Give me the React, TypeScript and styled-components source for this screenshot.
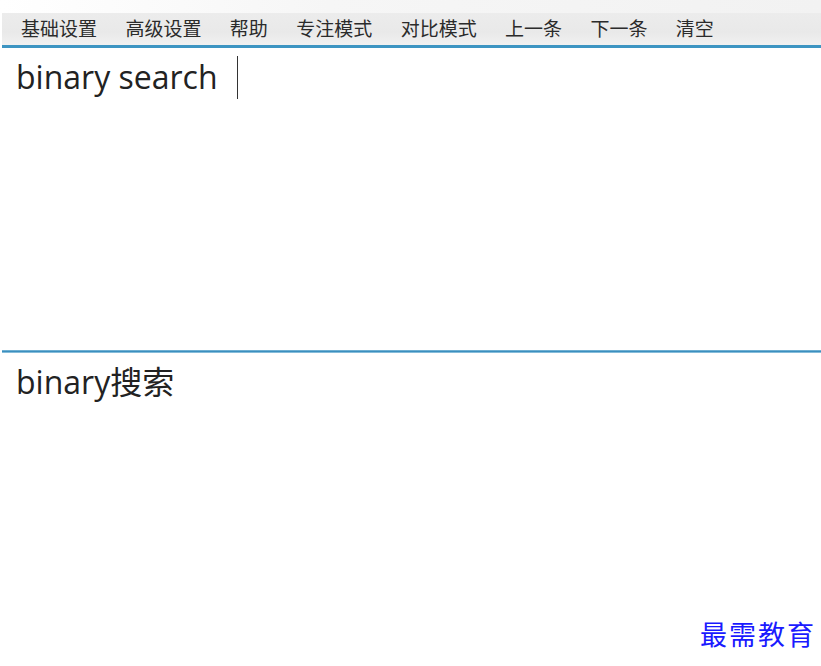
import React from "react";
import styled, { createGlobalStyle } from "styled-components";

const Global = createGlobalStyle`
  html, body { margin: 0; padding: 0; background: #ffffff; }
  body { font-family: "Open Sans", "Noto Sans CJK SC", sans-serif; }
`;

const Page = styled.div`
  width: 821px;
  height: 666px;
  display: flex;
  flex-direction: column;
  background: #ffffff;
  position: relative;
  overflow: hidden;
`;

const TopStrip = styled.div`
  height: 13px;
  background: linear-gradient(to right, #ffffff 0%, #f6f6f6 40%, #f2f2f2 100%);
`;

const MenuBar = styled.nav`
  height: 32px;
  margin-left: 2px;
  display: flex;
  align-items: center;
  gap: 28.4px;
  padding-left: 19px;
  background: linear-gradient(to bottom, #ececec 0%, #e9e9e9 60%, #f1f1f1 100%);
  border-bottom: 3px solid #3d95c2;
`;

const MenuItem = styled.span`
  font-family: "Noto Sans CJK SC", sans-serif;
  font-size: 19px;
  color: #2b2b2b;
  line-height: 1;
  margin-top: -3px;
`;

const Pane = styled.div<{ $h: number }>`
  height: ${(p) => p.$h}px;
  padding: 8px 0 0 16px;
  box-sizing: border-box;
  display: flex;
  align-items: flex-start;
`;

const PaneText = styled.span`
  font-family: "Open Sans", "Noto Sans CJK SC", sans-serif;
  font-size: 32px;
  line-height: 42px;
  color: #222222;
  white-space: pre;
`;

const Caret = styled.span`
  display: inline-block;
  width: 1px;
  height: 43px;
  background: #333333;
  margin-left: 19px;
`;

const Divider = styled.div`
  height: 3px;
  margin-left: 2px;
  background: linear-gradient(to bottom, #87bfdc 0%, #3b8fbf 50%, #a9d2e6 100%);
`;

const Watermark = styled.div`
  position: absolute;
  right: 5px;
  bottom: 19px;
  font-family: "Noto Sans CJK SC", serif;
  font-size: 27px;
  letter-spacing: 2px;
  color: #1a1aff;
  line-height: 1;
`;

const menus = ["基础设置", "高级设置", "帮助", "专注模式", "对比模式", "上一条", "下一条", "清空"];

export default function App() {
  return (
    <Page>
      <Global />
      <TopStrip />
      <MenuBar>
        {menus.map((m) => (
          <MenuItem key={m}>{m}</MenuItem>
        ))}
      </MenuBar>
      <Pane $h={302}>
        <PaneText>binary search</PaneText>
        <Caret />
      </Pane>
      <Divider />
      <Pane $h={313}>
        <PaneText>binary搜索</PaneText>
      </Pane>
      <Watermark>最需教育</Watermark>
    </Page>
  );
}
